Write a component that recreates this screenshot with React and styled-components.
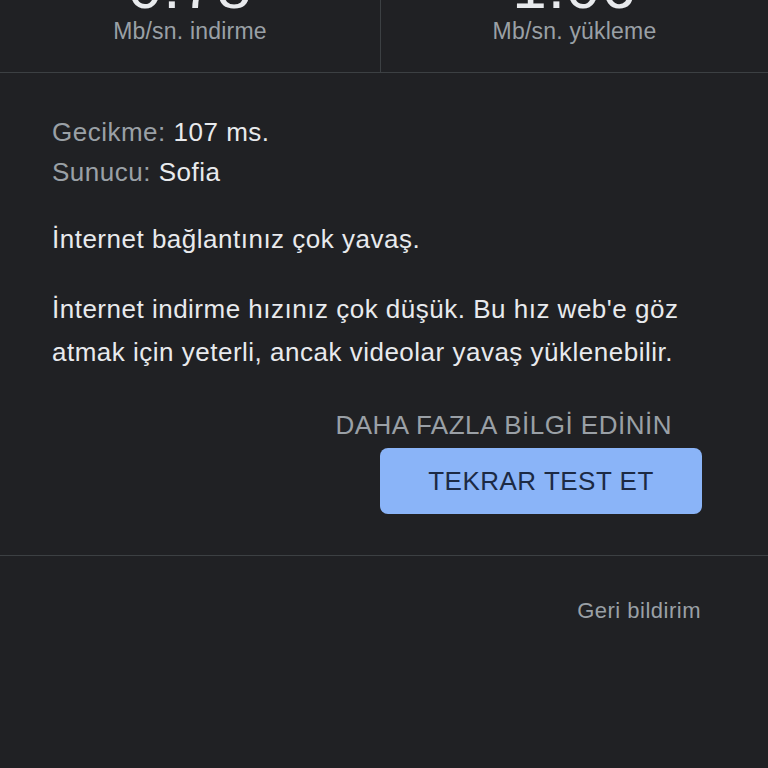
import React from "react";
import styled, { createGlobalStyle } from "styled-components";

const Global = createGlobalStyle`
  html, body { margin: 0; padding: 0; background: #202124; }
  body { font-family: "Liberation Sans", Arial, sans-serif; color: #e8eaed; overflow: hidden; }
`;

const Page = styled.div`
  width: 768px;
  height: 768px;
  background: #202124;
  overflow: hidden;
`;

const Stats = styled.div`
  display: grid;
  grid-template-columns: 381px 1fr;
  margin-top: -44px;
  border-bottom: 1px solid #3c4043;
`;

const Stat = styled.div`
  display: flex;
  flex-direction: column;
  align-items: center;
  padding-bottom: 28px;
  border-right: ${(p) => (p.$divider ? "1px solid #3c4043" : "none")};
`;

const Value = styled.div`
  font-size: 62px;
  line-height: 62px;
  letter-spacing: 1px;
  color: #e8eaed;
`;

const Unit = styled.div`
  font-size: 23px;
  line-height: 26px;
  letter-spacing: 0.2px;
  color: #9aa0a6;
`;

const Details = styled.div`
  display: flex;
  flex-direction: column;
  padding: 39px 66px 41px 52px;
  border-bottom: 1px solid #3c4043;
  letter-spacing: 0.5px;
`;

const InfoLine = styled.div`
  font-size: 26px;
  line-height: 40px;
  color: #9aa0a6;
  & > span { color: #e8eaed; }
`;

const Para = styled.p`
  margin: ${(p) => p.$mt}px 0 0;
  font-size: 26px;
  line-height: 43px;
  color: #e8eaed;
`;

const Actions = styled.div`
  display: flex;
  flex-direction: column;
  align-items: flex-end;
  margin-top: 35px;
`;

const LinkButton = styled.div`
  font-size: 26px;
  line-height: 32px;
  color: #9aa0a6;
  padding-right: 30px;
`;

const PrimaryButton = styled.button`
  margin-top: 7px;
  width: 322px;
  height: 66px;
  border: none;
  border-radius: 8px;
  background: #8ab4f8;
  color: #1c2a44;
  font-family: "Liberation Sans", Arial, sans-serif;
  font-size: 26px;
  letter-spacing: 0.5px;
`;

const Footer = styled.div`
  display: flex;
  justify-content: flex-end;
  padding: 42px 67px 0 0;
`;

const Feedback = styled.div`
  font-size: 22px;
  line-height: 26px;
  letter-spacing: 0.5px;
  color: #9aa0a6;
`;

export default function App() {
  return (
    <Page>
      <Global />
      <Stats>
        <Stat $divider>
          <Value>0.78</Value>
          <Unit>Mb/sn. indirme</Unit>
        </Stat>
        <Stat>
          <Value>1.06</Value>
          <Unit>Mb/sn. yükleme</Unit>
        </Stat>
      </Stats>
      <Details>
        <InfoLine>Gecikme: <span>107 ms.</span></InfoLine>
        <InfoLine>Sunucu: <span>Sofia</span></InfoLine>
        <Para $mt={26}>İnternet bağlantınız çok yavaş.</Para>
        <Para $mt={27}>
          İnternet indirme hızınız çok düşük. Bu hız web'e göz atmak için yeterli, ancak videolar yavaş yüklenebilir.
        </Para>
        <Actions>
          <LinkButton>DAHA FAZLA BİLGİ EDİNİN</LinkButton>
          <PrimaryButton>TEKRAR TEST ET</PrimaryButton>
        </Actions>
      </Details>
      <Footer>
        <Feedback>Geri bildirim</Feedback>
      </Footer>
    </Page>
  );
}
